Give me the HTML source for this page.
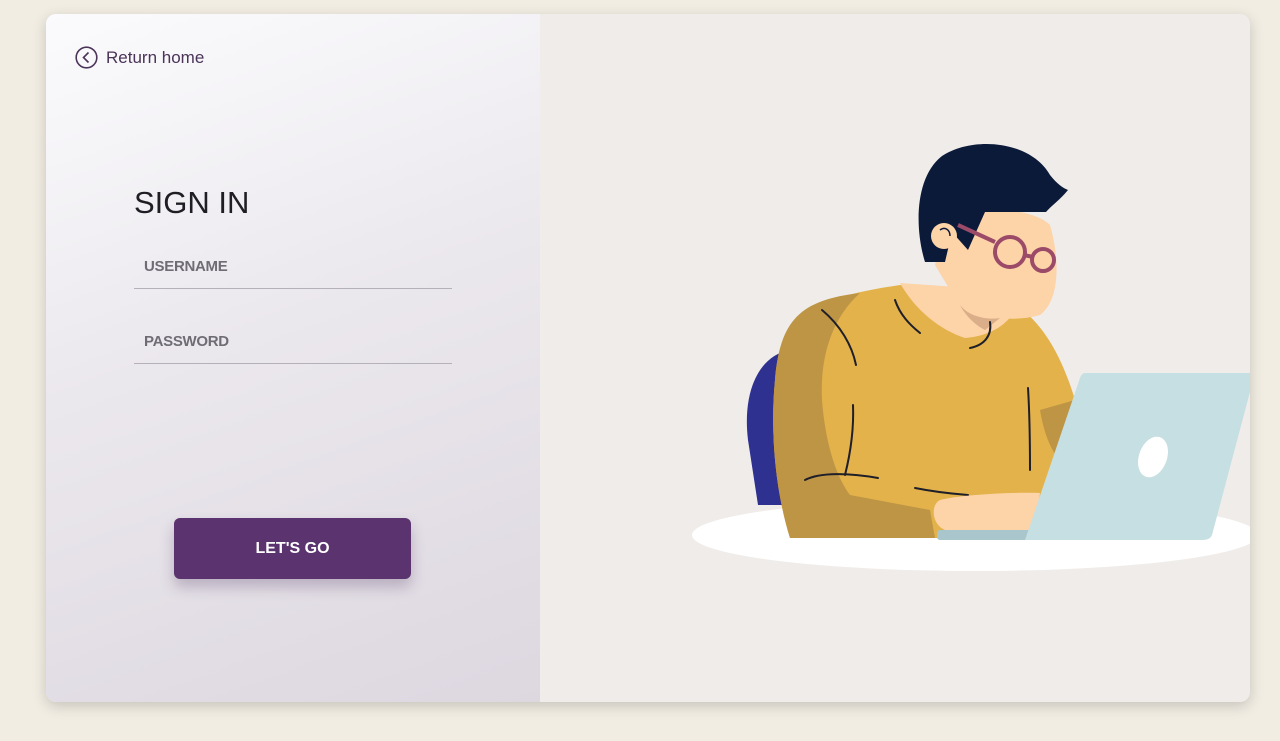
<!DOCTYPE html>
<html><head><meta charset="utf-8"><style>
html,body{margin:0;padding:0}
body{width:1280px;height:741px;background:#f1ede3;position:relative;overflow:hidden;font-family:"Liberation Sans",sans-serif}
.card{position:absolute;left:46px;top:14px;width:1204px;height:688px;border-radius:10px;overflow:hidden;background:#f0ece9;box-shadow:0 4px 14px rgba(0,0,0,.18)}
.left{position:absolute;left:0;top:0;width:494px;height:688px;background:linear-gradient(160deg,#fbfbfd 0%,#ebe8ed 45%,#ddd7e0 100%)}
.ret{position:absolute;left:29px;top:32px;font-size:17px;color:#4a3458;display:flex;align-items:center;gap:8px}
h1{position:absolute;left:88px;top:171px;margin:0;font-size:31px;font-weight:normal;color:#1e1e24;letter-spacing:0}
.f{position:absolute;left:88px;width:318px;border-bottom:1.5px solid #b5b1ba;font-size:15px;color:#6f6d74;padding-left:10px;box-sizing:border-box;font-weight:bold;letter-spacing:-.3px}
.btn{position:absolute;left:128px;top:504px;width:237px;height:61px;border-radius:6px;background:#5b346f;color:#fff;font-weight:bold;font-size:16px;display:flex;align-items:center;justify-content:center;box-shadow:0 8px 14px rgba(60,30,80,.25)}
svg.ill{position:absolute;left:0;top:0}
</style></head><body>
<div class="card">
<div class="left">
<div class="ret"><svg width="23" height="23" viewBox="0 0 23 23"><circle cx="11.5" cy="11.5" r="10.3" fill="none" stroke="#4a3458" stroke-width="1.6"/><path d="M13.5 6.5 L8.5 11.5 L13.5 16.5" fill="none" stroke="#4a3458" stroke-width="1.6"/></svg>Return home</div>
<h1>SIGN IN</h1>
<div class="f" style="top:244px;height:31px">USERNAME</div>
<div class="f" style="top:319px;height:31px">PASSWORD</div>
<div class="btn">LET'S GO</div>
</div>
</div>
<svg class="ill" width="1280" height="741">
<defs><clipPath id="c"><rect x="46" y="14" width="1204" height="688"/></clipPath></defs>
<g clip-path="url(#c)">
<ellipse cx="975" cy="535" rx="283" ry="36" fill="#fff"/>
<path d="M790 350 C760 355 742 390 748 440 L758 505 L790 505 Z" fill="#2e3190"/>
<path d="M775 380 C780 320 800 300 900 285 L1010 300 C1040 320 1060 350 1075 400 L1055 480 L1035 538 L790 538 C775 490 770 430 775 380Z" fill="#e3b24b"/>
<path d="M775 380 C780 320 800 300 860 293 C830 320 820 360 822 400 C825 440 835 475 850 495 L930 510 L935 538 L790 538 C775 490 770 430 775 380Z" fill="#bd9545"/>
<path d="M1040 410 L1075 400 L1070 470 C1055 460 1045 440 1040 410Z" fill="#bd9545"/>
<path d="M900 283 C915 310 940 330 965 338 C990 336 1005 325 1012 315 L1000 290 Z" fill="#fdd3a8"/>
<path d="M945 220 C960 205 1030 205 1050 225 C1060 260 1060 300 1040 315 C1015 322 990 318 975 312 L950 290 L935 265 Z" fill="#fdd3a8"/>
<path d="M960 305 C970 318 990 320 1000 318 L985 330 C975 325 965 315 960 305Z" fill="#d9ae88"/>
<path d="M925 262 C915 230 914 178 942 156 C972 136 1030 140 1050 175 C1057 184 1063 188 1068 190 C1060 200 1052 205 1046 212 L985 212 L968 250 L952 232 L945 262 Z" fill="#0c1a3a"/>
<circle cx="944" cy="236" r="13" fill="#fdd3a8"/>
<path d="M940 230 C945 226 950 230 950 236" fill="none" stroke="#0c1a3a" stroke-width="1.5"/>
<path d="M958 225 L995 242" stroke="#9b4a68" stroke-width="4"/>
<circle cx="1010" cy="252" r="15" fill="none" stroke="#9b4a68" stroke-width="4"/>
<circle cx="1043" cy="260" r="11" fill="none" stroke="#9b4a68" stroke-width="4"/>
<path d="M1024 255 L1033 257" stroke="#9b4a68" stroke-width="4"/>
<g fill="none" stroke="#1f1f2a" stroke-width="2" stroke-linecap="round">
<path d="M822 310 C840 325 852 345 856 365"/><path d="M895 300 C900 315 910 325 920 333"/><path d="M990 322 C992 335 985 345 970 348"/>
<path d="M853 405 C854 430 850 455 845 475"/><path d="M1028 388 C1030 420 1030 450 1030 470"/><path d="M805 480 C820 472 850 473 878 478"/><path d="M915 488 C935 492 955 494 968 495"/>
</g>
<path d="M940 500 C960 495 1010 492 1040 493 L1035 530 L945 530 C932 525 930 505 940 500Z" fill="#fdd3a8"/>
<rect x="937" y="530" width="95" height="10" rx="3" fill="#a9c6cc"/>
<path d="M1085 373 L1255 373 L1212 535 C1210 540 1205 540 1200 540 L1025 540 L1080 378 C1081 375 1083 373 1085 373Z" fill="#c6dfe2"/>
<ellipse cx="1153" cy="457" rx="14" ry="21" transform="rotate(20 1153 457)" fill="#fff"/>
</g>
</svg>
</body></html>
